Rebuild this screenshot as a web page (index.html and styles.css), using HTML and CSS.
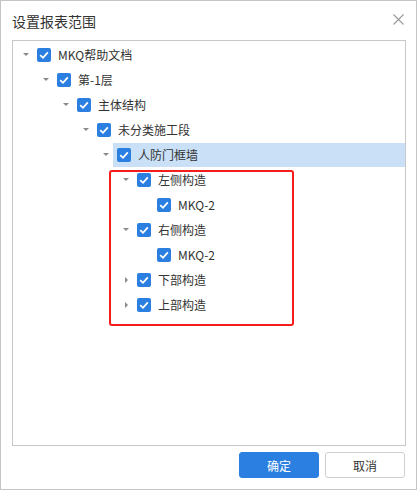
FILE: index.html
```html
<!DOCTYPE html>
<html lang="zh-CN">
<head>
  <title>设置报表范围</title>
  <meta charset="utf-8">
  <link rel="stylesheet" href="styles.css">
</head>
<body>
  <div class="dialog">
    <div class="header">
      <span class="title">设置报表范围</span>
      <span class="close">
        <svg width="11" height="11" viewBox="0 0 11 11"><path d="M0.5 0.5L10.5 10.5M10.5 0.5L0.5 10.5" stroke="#9a9a9a" stroke-width="1.1" fill="none"/></svg>
      </span>
    </div>

    <div class="tree">
      <div class="row lv0"><span class="toggle open"></span><span class="node"><span class="cb"></span><span class="label">MKQ帮助文档</span></span></div>
      <div class="row lv1"><span class="toggle open"></span><span class="node"><span class="cb"></span><span class="label">第-1层</span></span></div>
      <div class="row lv2"><span class="toggle open"></span><span class="node"><span class="cb"></span><span class="label">主体结构</span></span></div>
      <div class="row lv3"><span class="toggle open"></span><span class="node"><span class="cb"></span><span class="label">未分类施工段</span></span></div>
      <div class="row lv4"><span class="toggle open"></span><span class="node selected"><span class="cb"></span><span class="label">人防门框墙</span></span></div>
      <div class="row lv5"><span class="toggle open"></span><span class="node"><span class="cb"></span><span class="label">左侧构造</span></span></div>
      <div class="row lv6"><span class="toggle"></span><span class="node"><span class="cb"></span><span class="label">MKQ-2</span></span></div>
      <div class="row lv5"><span class="toggle open"></span><span class="node"><span class="cb"></span><span class="label">右侧构造</span></span></div>
      <div class="row lv6"><span class="toggle"></span><span class="node"><span class="cb"></span><span class="label">MKQ-2</span></span></div>
      <div class="row lv5"><span class="toggle closed"></span><span class="node"><span class="cb"></span><span class="label">下部构造</span></span></div>
      <div class="row lv5"><span class="toggle closed"></span><span class="node"><span class="cb"></span><span class="label">上部构造</span></span></div>
      <div class="mark"></div>
    </div>

    <div class="footer">
      <button class="btn primary">确定</button>
      <button class="btn">取消</button>
    </div>
  </div>
</body>
</html>
```

FILE: styles.css
```css
body {
  margin: 0;
  font-family: "Noto Sans CJK SC", "Noto Sans", sans-serif;
  color: #333;
}
.dialog {
  width: 417px;
  height: 490px;
  box-sizing: border-box;
  border: 1px solid #c4c4c4;
  background: #fff;
}

.header {
  height: 39px;
  display: flex;
  align-items: center;
  justify-content: space-between;
  padding: 0 12px 0 11px;
}
.title {
  font-size: 14px;
  color: #333;
}
.close {
  display: flex;
  margin-top: -2px;
}

.tree {
  position: relative;
  box-sizing: border-box;
  width: 394px;
  height: 406px;
  margin: 0 10px 0 11px;
  padding-top: 2px;
  border: 1px solid #c8c8c8;
}
.row {
  display: flex;
  align-items: center;
  height: 24px;
  margin-bottom: 1px;
  font-size: 12px;
}
.lv0 { padding-left: 5px; }
.lv1 { padding-left: 25px; }
.lv2 { padding-left: 45px; }
.lv3 { padding-left: 65px; }
.lv4 { padding-left: 85px; }
.lv5 { padding-left: 105px; }
.lv6 { padding-left: 125px; }

.toggle {
  width: 15px;
  height: 24px;
  position: relative;
  flex: none;
}
.toggle.open::after {  /* down arrow */
  content: "";
  position: absolute;
  left: 5px;
  top: 10px;
  border-left: 3px solid transparent;
  border-right: 3px solid transparent;
  border-top: 3px solid #8a8a8a;
}
.toggle.closed::after {  /* right arrow */
  content: "";
  position: absolute;
  left: 7px;
  top: 9px;
  border-top: 3px solid transparent;
  border-bottom: 3px solid transparent;
  border-left: 3px solid #8a8a8a;
}

.node {
  display: flex;
  align-items: center;
  height: 24px;
  padding-left: 4px;
  padding-right: 10px;
}
.node.selected {
  flex: 1;
  background-color: #c9e0f7;
}
.cb {
  width: 14px;
  height: 14px;
  border-radius: 2px;
  background: #2b7fe1 url("data:image/svg+xml,%3Csvg xmlns='http://www.w3.org/2000/svg' width='14' height='14'%3E%3Cpath d='M3.2 7.2L6 9.8L10.8 4.4' stroke='white' stroke-width='1.8' fill='none'/%3E%3C/svg%3E") no-repeat center;
  flex: none;
}
.label {
  margin-left: 7px;
  line-height: 24px;
}

.mark {  /* red annotation box */
  position: absolute;
  left: 96px;
  top: 129px;
  width: 185px;
  height: 156px;
  box-sizing: border-box;
  border: 2px solid #f51c1c;
  border-radius: 3px;
}

.footer {
  display: flex;
  justify-content: flex-end;
  gap: 6px;
  padding: 6px 11px 0 0;
}
.btn {
  width: 80px;
  height: 26px;
  font-family: inherit;
  font-size: 12px;
  color: #333;
  background: #fff;
  border: 1px solid #cfcfcf;
  border-radius: 3px;
  padding: 0;
}
.btn.primary {
  background: #2b7fe1;
  border-color: #2b7fe1;
  color: #fff;
}
```
